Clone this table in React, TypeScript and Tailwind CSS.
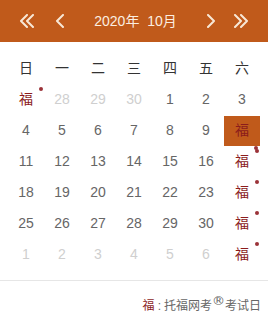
import React from 'react';

type Day = { label: string; muted?: boolean; fu?: boolean; active?: boolean };

const weekdays = ['日', '一', '二', '三', '四', '五', '六'];

const rows: Day[][] = [
  [{ label: '福', fu: true }, { label: '28', muted: true }, { label: '29', muted: true }, { label: '30', muted: true }, { label: '1' }, { label: '2' }, { label: '3' }],
  [{ label: '4' }, { label: '5' }, { label: '6' }, { label: '7' }, { label: '8' }, { label: '9' }, { label: '福', fu: true, active: true }],
  [{ label: '11' }, { label: '12' }, { label: '13' }, { label: '14' }, { label: '15' }, { label: '16' }, { label: '福', fu: true }],
  [{ label: '18' }, { label: '19' }, { label: '20' }, { label: '21' }, { label: '22' }, { label: '23' }, { label: '福', fu: true }],
  [{ label: '25' }, { label: '26' }, { label: '27' }, { label: '28' }, { label: '29' }, { label: '30' }, { label: '福', fu: true }],
  [{ label: '1', muted: true }, { label: '2', muted: true }, { label: '3', muted: true }, { label: '4', muted: true }, { label: '5', muted: true }, { label: '6', muted: true }, { label: '福', fu: true }],
];

const Chevron = ({ dir, double }: { dir: 'left' | 'right'; double?: boolean }) => {
  const flip = dir === 'right' ? 'scale(-1,1) translate(-16,0)' : undefined;
  return (
    <svg width="16" height="14" viewBox="0 0 16 14" fill="none" stroke="#f7e7d6" strokeWidth="2" strokeLinecap="round" strokeLinejoin="round">
      <g transform={flip}>
        {double ? (
          <>
            <path d="M8 1 L2 7 L8 13" />
            <path d="M14 1 L8 7 L14 13" />
          </>
        ) : (
          <path d="M11 1 L5 7 L11 13" />
        )}
      </g>
    </svg>
  );
};

const DayCell = ({ day }: { day: Day }) => {
  if (day.fu) {
    return (
      <div className="relative flex items-center justify-center h-[31px]">
        <div className={`flex items-center justify-center w-full h-[30px] ${day.active ? 'bg-[#c05a1b]' : ''}`}>
          <span className="text-[#8b1c1c]">{day.label}</span>
        </div>
        {!day.active && <span className="absolute right-[1px] top-[3px] w-[4px] h-[4px] rounded-full bg-[#9b3238]" />}
        {day.active && <span className="absolute right-[2px] -bottom-[4px] w-[4px] h-[4px] rounded-full bg-[#9b3238]" />}
      </div>
    );
  }
  return (
    <div className="flex items-center justify-center h-[31px]">
      <span className={day.muted ? 'text-[#cfcfcf]' : 'text-[#666]'}>{day.label}</span>
    </div>
  );
};

export default function App() {
  return (
    <div className="w-[268px] h-[318px] bg-white overflow-hidden" style={{ fontFamily: '"Liberation Sans", "Noto Sans CJK SC", sans-serif' }}>
      {/* Header */}
      <div className="h-[42px] bg-[#c05a1b] flex items-center px-[19px] text-[#f7e7d6]">
        <Chevron dir="left" double />
        <div className="ml-[17px]"><Chevron dir="left" /></div>
        <div className="flex-1 text-center text-[14px] text-[#fbeee0]">2020年&nbsp;&nbsp;10月</div>
        <div className="mr-[14px]"><Chevron dir="right" /></div>
        <Chevron dir="right" double />
      </div>

      <div className="px-[8px] pt-[11px] text-[14px]">
        <div className="grid grid-cols-7">
          {weekdays.map(w => (
            <div key={w} className="flex items-center justify-center h-[31px] text-[#333]">{w}</div>
          ))}
        </div>
        {rows.map((row, i) => (
          <div key={i} className="grid grid-cols-7">
            {row.map((d, j) => <DayCell key={j} day={d} />)}
          </div>
        ))}
      </div>

      <div className="mt-[10px] border-t border-[#e6e6e6] pt-[17px] pr-[7px] flex justify-end items-baseline text-[12px] leading-[16px] text-[#666]">
        <span className="text-[#8b1c1c]">福</span>
        <span className="mx-[3px]">:</span>
        <span>托福网考</span>
        <span className="relative -top-[5px] text-[13px] leading-none" style={{ fontFamily: '"DejaVu Sans", sans-serif' }}>®</span>
        <span>考试日</span>
      </div>
    </div>
  );
}
